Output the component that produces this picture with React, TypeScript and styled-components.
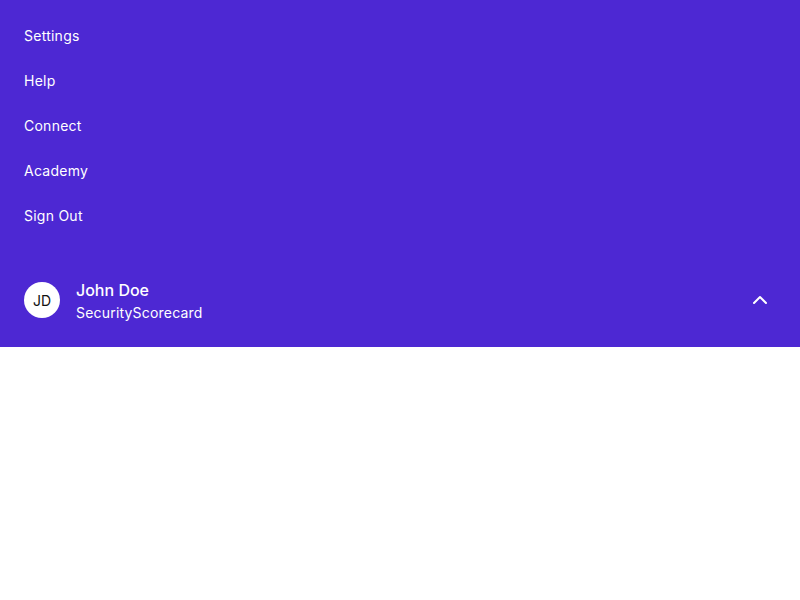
import React from "react";
import styled, { createGlobalStyle } from "styled-components";
import { ChevronUp } from "lucide-react";

const GlobalStyle = createGlobalStyle`
  body {
    margin: 0;
    background: #ffffff;
    font-family: Inter, "Noto Sans", sans-serif;
  }
`;

const Panel = styled.div`
  background: #4d28d3;
  color: #ffffff;
  display: flex;
  flex-direction: column;
  height: 347px;
  box-sizing: border-box;
`;

const Nav = styled.nav`
  display: flex;
  flex-direction: column;
  padding: 13px 24px 0;
`;

const NavItem = styled.a`
  display: flex;
  align-items: center;
  height: 45px;
  font-size: 14px;
  letter-spacing: 0.25px;
  color: #ffffff;
  text-decoration: none;
  cursor: pointer;
`;

const UserRow = styled.div`
  margin-top: auto;
  display: flex;
  align-items: center;
  gap: 16px;
  padding: 0 28px 23px 24px;
`;

const Avatar = styled.div`
  width: 36px;
  height: 36px;
  margin-top: -3px;
  border-radius: 50%;
  background: #ffffff;
  color: #111111;
  display: flex;
  align-items: center;
  justify-content: center;
  font-size: 14px;
  flex-shrink: 0;
`;

const UserText = styled.div`
  display: flex;
  flex-direction: column;
  flex: 1;
`;

const Name = styled.div`
  font-size: 16px;
  font-weight: 500;
  line-height: 22px;
`;

const Company = styled.div`
  margin-top: 1px;
  font-size: 14px;
  line-height: 22px;
  letter-spacing: 0.2px;
`;

const Toggle = styled.div`
  display: flex;
  align-items: center;
  justify-content: center;
  width: 24px;
  height: 24px;
  margin-top: -4px;
  cursor: pointer;
`;

const links = ["Settings", "Help", "Connect", "Academy", "Sign Out"];

export default function App() {
  return (
    <>
      <GlobalStyle />
      <Panel>
        <Nav>
          {links.map((l) => (
            <NavItem key={l}>{l}</NavItem>
          ))}
        </Nav>
        <UserRow>
          <Avatar>JD</Avatar>
          <UserText>
            <Name>John Doe</Name>
            <Company>SecurityScorecard</Company>
          </UserText>
          <Toggle>
            <ChevronUp size={24} strokeWidth={2} />
          </Toggle>
        </UserRow>
      </Panel>
    </>
  );
}
